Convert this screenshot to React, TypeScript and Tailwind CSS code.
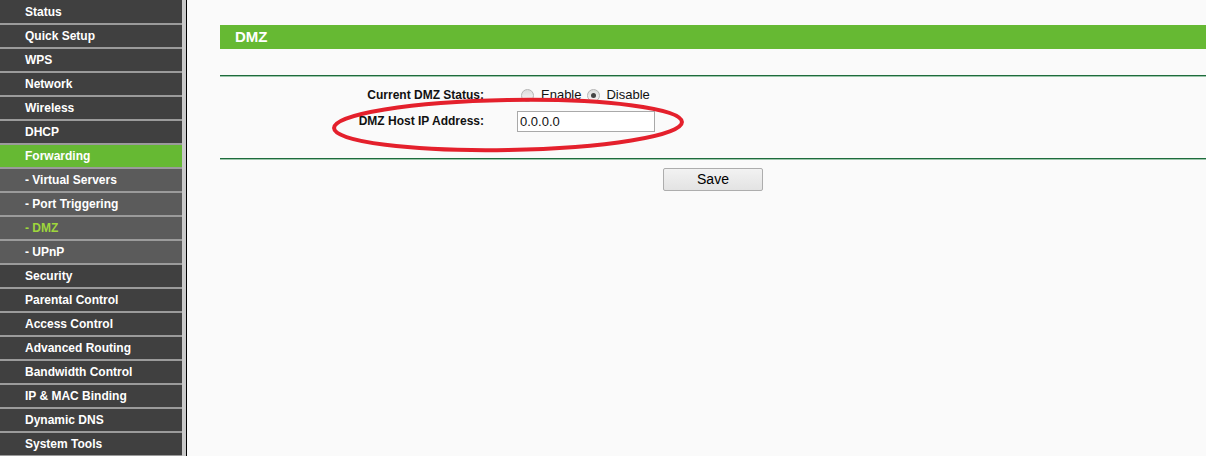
import React from 'react';

type MenuItem = { label: string; sub?: boolean; active?: boolean; current?: boolean };

const menu: MenuItem[] = [
  { label: 'Status' },
  { label: 'Quick Setup' },
  { label: 'WPS' },
  { label: 'Network' },
  { label: 'Wireless' },
  { label: 'DHCP' },
  { label: 'Forwarding', active: true },
  { label: '- Virtual Servers', sub: true },
  { label: '- Port Triggering', sub: true },
  { label: '- DMZ', sub: true, current: true },
  { label: '- UPnP', sub: true },
  { label: 'Security' },
  { label: 'Parental Control' },
  { label: 'Access Control' },
  { label: 'Advanced Routing' },
  { label: 'Bandwidth Control' },
  { label: 'IP & MAC Binding' },
  { label: 'Dynamic DNS' },
  { label: 'System Tools' },
];

const Radio: React.FC<{ checked?: boolean }> = ({ checked }) => (
  <span className="inline-flex h-[13px] w-[13px] items-center justify-center rounded-full border border-[#b5b5b5] bg-gradient-to-b from-[#dcdcdc] to-[#f7f7f7]">
    {checked && <span className="h-[5px] w-[5px] rounded-full bg-[#444]" />}
  </span>
);

const Divider: React.FC = () => (
  <div className="h-[2px] border-t border-[#1e6b3c] bg-[#9cc6ab]" />
);

const App: React.FC = () => {
  return (
    <div className="flex h-[456px] w-[1206px] overflow-hidden bg-[#fafafa] font-['Liberation_Sans',Arial,sans-serif]">
      {/* menu */}
      <div className="flex w-[182px] flex-col bg-[#404040] pt-[1px]">
        {menu.map((m) => (
          <div
            key={m.label}
            className={
              'flex h-[24px] shrink-0 items-center border-b-2 border-[#9b9b9b] pl-[25px] text-[12px] font-bold ' +
              (m.active ? 'bg-[#66b933] text-white' : m.sub ? 'bg-[#5b5b5b] ' : 'bg-[#404040] text-white') +
              (m.current ? 'text-[#9fd63c]' : m.sub ? 'text-white' : '')
            }
          >
            {m.label}
          </div>
        ))}
      </div>
      <div className="w-[4px] bg-[#c9c9c9]" />
      <div className="w-[1px] bg-black" />

      {/* content */}
      <div className="relative flex-1 pl-[33px] pt-[25px]">
        <div className="flex h-[24px] items-center bg-[#66b933] pl-[15px] text-[15px] font-bold text-white">DMZ</div>
        <div className="mt-[26px]">
          <Divider />
        </div>

        <div className="pt-[8px] text-[12px] text-[#111]">
          <div className="flex h-[20px] items-center">
            <div className="w-[264px] text-right font-bold">Current DMZ Status:</div>
            <div className="ml-[37px] flex items-center text-[13px]">
              <Radio />
              <span className="ml-[7px]">Enable</span>
              <span className="ml-[6px] flex items-center">
                <Radio checked />
              </span>
              <span className="ml-[6px]">Disable</span>
            </div>
          </div>
          <div className="mt-[3px] flex h-[26px] items-center">
            <div className="w-[264px] text-right font-bold">DMZ Host IP Address:</div>
            <input
              readOnly
              value="0.0.0.0"
              className="ml-[33px] h-[21px] w-[138px] border border-[#a9a9a9] bg-white px-[2px] text-[13px] outline-none"
            />
          </div>
        </div>

        <div className="mt-[24px]">
          <Divider />
        </div>

        <div className="mt-[8px] flex pl-[443px]">
          <button className="h-[23px] w-[100px] rounded-[2px] border border-[#adadad] bg-gradient-to-b from-[#f2f2f2] to-[#e3e3e3] text-[14px] text-black">
            Save
          </button>
        </div>

        {/* hand-drawn highlight */}
        <svg className="pointer-events-none absolute left-[143px] top-[95px]" width="360" height="62" viewBox="0 0 360 62">
          <ellipse
            cx="178"
            cy="30"
            rx="174"
            ry="25"
            fill="none"
            stroke="#e4202c"
            strokeWidth="4"
            transform="rotate(-1 178 30)"
          />
        </svg>
      </div>
    </div>
  );
};

export default App;
